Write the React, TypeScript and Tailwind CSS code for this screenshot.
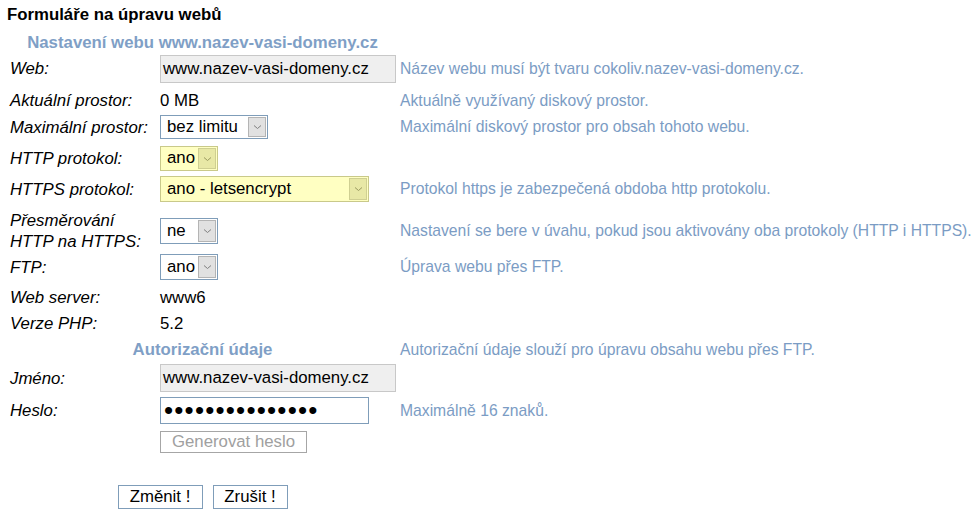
import React from "react"

const labelCls = "italic leading-[21px]"
const descCls = "text-[#7b9cc4] text-[15.7px] whitespace-nowrap"

function Chevron({ color = "#7a7a7a" }: { color?: string }) {
  return (
    <svg width="9" height="6" viewBox="0 0 9 6" fill="none">
      <path d="M1 1.5 L4.5 4.5 L8 1.5" stroke={color} strokeWidth="1" />
    </svg>
  )
}

function FakeSelect({
  value,
  width,
  height,
  yellow = false,
}: {
  value: string
  width: string
  height: string
  yellow?: boolean
}) {
  return (
    <div
      className={`flex items-stretch border ${width} ${height} ${
        yellow ? "border-[#c9c98a] bg-[#ffffc2]" : "border-[#7f9db9] bg-white"
      }`}
    >
      <span className="flex-1 pl-[6px] flex items-center leading-none">{value}</span>
      <span
        className={`w-[18px] m-px flex items-center justify-center border ${
          yellow ? "bg-[#e8e8a6] border-[#cfcf92]" : "bg-[#e1e1e1] border-[#b4b4b4]"
        }`}
      >
        <Chevron color={yellow ? "#9a9a60" : "#808080"} />
      </span>
    </div>
  )
}

function Row({
  label,
  children,
  desc,
  className,
}: {
  label?: React.ReactNode
  children?: React.ReactNode
  desc?: string
  className: string
}) {
  return (
    <div className={`grid grid-cols-[150px_240px_1fr] items-center pl-[10px] ${className}`}>
      <div className={labelCls}>{label}</div>
      <div className="flex items-center">{children}</div>
      <div className={descCls}>{desc}</div>
    </div>
  )
}

export default function App() {
  return (
    <div className="w-[977px] h-[516px] bg-white text-black text-[16.8px] font-['Liberation_Sans',Arial,sans-serif] overflow-hidden">
      <div className="h-[30px] pl-[7px] flex items-center font-bold">Formuláře na úpravu webů</div>

      <div className="grid grid-cols-[385px_1fr] items-center pl-[10px] h-[18px]">
        <div className="text-center font-bold text-[#7f9fc6] whitespace-nowrap">
          Nastavení webu www.nazev-vasi-domeny.cz
        </div>
      </div>

      <Row label="Web:" desc="Název webu musí být tvaru cokoliv.nazev-vasi-domeny.cz." className="mt-[6px] h-[29px]">
        <div className="w-[236px] h-[28px] border border-[#c8c8c8] bg-[#efefef] pl-[2px] flex items-center">
          www.nazev-vasi-domeny.cz
        </div>
      </Row>

      <Row label="Aktuální prostor:" desc="Aktuálně využívaný diskový prostor." className="mt-[5px] h-[24px]">
        0 MB
      </Row>

      <Row label="Maximální prostor:" desc="Maximální diskový prostor pro obsah tohoto webu." className="mt-[3px] h-[24px]">
        <FakeSelect value="bez limitu" width="w-[108px]" height="h-[24px]" />
      </Row>

      <Row label="HTTP protokol:" className="mt-[7px] h-[25px]">
        <FakeSelect value="ano" width="w-[58px]" height="h-[25px]" yellow />
      </Row>

      <Row label="HTTPS protokol:" desc="Protokol https je zabezpečená obdoba http protokolu." className="mt-[5px] h-[26px]">
        <FakeSelect value="ano - letsencrypt" width="w-[209px]" height="h-[26px]" yellow />
      </Row>

      <Row
        label={
          <>
            Přesměrování
            <br />
            HTTP na HTTPS:
          </>
        }
        desc="Nastavení se bere v úvahu, pokud jsou aktivovány oba protokoly (HTTP i HTTPS)."
        className="mt-[8px] h-[36px]"
      >
        <FakeSelect value="ne" width="w-[58px]" height="h-[26px]" />
      </Row>

      <Row label="FTP:" desc="Úprava webu přes FTP." className="mt-[8px] h-[26px]">
        <FakeSelect value="ano" width="w-[58px]" height="h-[26px]" />
      </Row>

      <Row label="Web server:" className="mt-[5px] h-[22px]">
        www6
      </Row>

      <Row label="Verze PHP:" className="mt-[4px] h-[22px]">
        5.2
      </Row>

      <div className="grid grid-cols-[385px_5px_1fr] items-center pl-[10px] mt-[4px] h-[22px]">
        <div className="text-center font-bold text-[#7f9fc6]">Autorizační údaje</div>
        <div />
        <div className={descCls}>Autorizační údaje slouží pro úpravu obsahu webu přes FTP.</div>
      </div>

      <Row label="Jméno:" className="mt-[5px] h-[28px]">
        <div className="w-[236px] h-[28px] border border-[#c8c8c8] bg-[#efefef] pl-[2px] flex items-center">
          www.nazev-vasi-domeny.cz
        </div>
      </Row>

      <Row label="Heslo:" desc="Maximálně 16 znaků." className="mt-[5px] h-[27px]">
        <input
          type="password"
          readOnly
          value="abcdefghijklmno"
          className="w-[209px] h-[27px] border border-[#7f9db9] bg-white pl-[3px] text-[26px] tracking-[1.2px] outline-none"
        />
      </Row>

      <Row className="mt-[7px] h-[22px]">
        <button className="w-[147px] h-[22px] border border-[#a6a6a6] bg-white text-[#a0a0a0] leading-none">
          Generovat heslo
        </button>
      </Row>

      <div className="pl-[10px] mt-[32px]">
        <div className="w-[385px] flex justify-center gap-[10px]">
          <button className="w-[85px] h-[24px] border border-[#7f9db9] bg-white leading-none">Změnit !</button>
          <button className="w-[75px] h-[24px] border border-[#7f9db9] bg-white leading-none">Zrušit !</button>
        </div>
      </div>
    </div>
  )
}
